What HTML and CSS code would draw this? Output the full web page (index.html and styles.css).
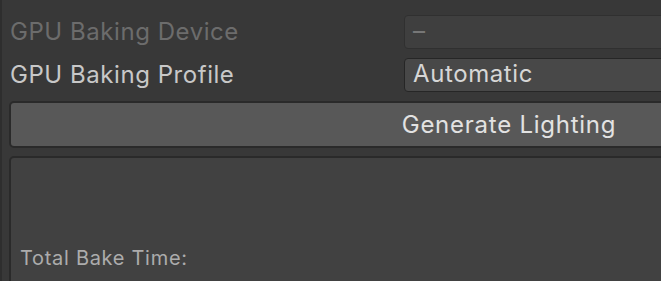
FILE: index.html
```html
<!DOCTYPE html>
<html>
<head>
<meta charset="utf-8">
<link rel="stylesheet" href="styles.css">
</head>
<body>
<div class="inspector">
  <div class="row disabled">
    <span class="label">GPU Baking Device</span>
    <div class="field">–</div>
  </div>
  <div class="row">
    <span class="label">GPU Baking Profile</span>
    <div class="field popup">Automatic</div>
  </div>
  <button class="generate">Generate Lighting</button>
  <div class="stats">
    <span class="stat-line">Total Bake Time:</span>
  </div>
</div>
</body>
</html>
```
FILE: styles.css
```css
html, body {
  margin: 0;
  padding: 0;
  background: #383838;
  overflow: hidden;
  width: 661px;
  height: 281px;
}
body {
  font-family: "Inter", "Noto Sans", sans-serif;
  border-left: 2px solid #2e2e2e;
  box-sizing: border-box;
}
.inspector {
  width: 1000px;
  padding: 15px 0 0 7px;
  display: flex;
  flex-direction: column;
}
.row {
  display: grid;
  grid-template-columns: 395px 1fr;
  align-items: center;
  height: 34px;
  margin-bottom: 9px;
}
.label {
  font-size: 24px;
  letter-spacing: 0.55px;
  color: #c8c8c8;
  padding-left: 1px;
  line-height: 34px;
}
.disabled .label {
  color: #6c6c6c;
}
.field {
  height: 34px;
  box-sizing: border-box;
  border: 1px solid #303030;
  border-radius: 4px;
  background: #3f3f3f;
  color: #777777;
  font-size: 24px;
  letter-spacing: 0.6px;
  line-height: 30px;
  padding-left: 8px;
}
.field.popup {
  background: #484848;
  border-color: #262626;
  color: #d6d6d6;
}
.generate {
  height: 47px;
  margin: 0;
  box-sizing: border-box;
  border: 2px solid #2a2a2a;
  border-radius: 5px;
  background: #585858;
  color: #e2e2e2;
  font-family: "Inter", "Noto Sans", sans-serif;
  font-size: 24px;
  letter-spacing: 0.75px;
  padding: 0;
  text-align: center;
}
.stats {
  margin-top: 8px;
  height: 130px;
  box-sizing: border-box;
  border: 2px solid #2a2a2a;
  border-radius: 5px;
  background: #414141;
  display: flex;
  flex-direction: column;
  justify-content: flex-end;
  padding: 0 0 14px 9px;
}
.stat-line {
  font-size: 20px;
  letter-spacing: 0.7px;
  color: #acacac;
}
```
